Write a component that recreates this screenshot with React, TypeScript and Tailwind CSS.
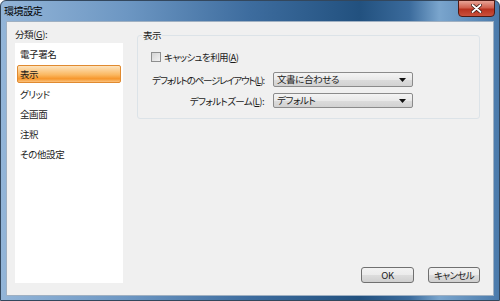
import React from "react";

const categories = ["電子署名", "表示", "グリッド", "全画面", "注釈", "その他設定"];

const Arrow = () => (
  <svg width="7" height="4" viewBox="0 0 7 4" className="shrink-0">
    <path d="M0 0h7L3.5 4z" fill="#111" />
  </svg>
);

const Select = ({ value }: { value: string }) => (
  <div className="h-[15px] flex items-center justify-between pl-[3px] pr-[6px] border border-[#8b8b8b] rounded-[2px] bg-[linear-gradient(#f4f4f4,#e9e9e9_50%,#dcdcdc_51%,#d2d2d2)]">
    <span className="leading-[13px]">{value}</span>
    <Arrow />
  </div>
);

export default function App() {
  return (
    <div className="w-[500px] h-[301px] flex flex-col rounded-t-[6px] border border-[#33475d] bg-[linear-gradient(90deg,#93b5d8_0%,#6d97c3_25%,#3d6c9e_50%,#22517f_72%,#3b6b9c_82%,#7aa5cd_88%,#4a7aab_100%)] font-['Noto_Sans_CJK_JP',sans-serif] text-[9.5px] tracking-[-0.4px] text-[#1b1b1b] [font-feature-settings:'palt']">
      {/* title bar */}
      <div className="relative h-[20px] flex items-center pl-[3px]">
        <span className="text-[10px] text-black leading-[14px]">環境設定</span>
        <div className="absolute right-[4px] top-[-1px] w-[37px] h-[17px] flex items-center justify-center rounded-b-[4px] border border-[#4f1a14] bg-[linear-gradient(#e8a497,#d0604e_45%,#b8321f_55%,#c9503c)]">
          <svg width="11" height="9" viewBox="0 0 11 9">
            <path d="M1.5 1l8 7M9.5 1l-8 7" stroke="#3a1712" strokeWidth="3.4" strokeLinecap="round" />
            <path d="M1.5 1l8 7M9.5 1l-8 7" stroke="#fff" strokeWidth="1.8" strokeLinecap="round" />
          </svg>
        </div>
      </div>

      {/* client area */}
      <div className="flex-1 mx-[5px] mb-[4px] border border-[#9fb0c2] bg-[#f0f0f0] flex">
        {/* categories */}
        <div className="ml-[8px] w-[108px] flex flex-col">
          <div className="h-[21px] pt-[5px] leading-[14px]">
            分類(<span className="underline">G</span>):
          </div>
          <div className="h-[240px] bg-white pt-[1px]">
            {categories.map((c) => (
              <div key={c} className="h-[20px] px-[2px] py-[1px]">
                <div
                  className={`h-[18px] flex items-center rounded-[2px] leading-[14px] ${
                    c === "表示"
                      ? "border border-[#e08a30] bg-[linear-gradient(#fde3bd,#fbb861_55%,#f6962c_80%,#fbc27e)] pl-[2px]"
                      : "pl-[3px]"
                  }`}
                >
                  {c}
                </div>
              </div>
            ))}
          </div>
        </div>

        {/* settings */}
        <div className="ml-[14px] pr-[13px] flex-1 flex flex-col">
          <div className="relative mt-[13px] h-[84px] border border-[#dce3e8] rounded-[3px]">
            <span className="absolute left-[4px] top-[-8px] px-[1px] bg-[#f0f0f0] leading-[14px]">表示</span>
            <div className="mt-[15px] ml-[13px] flex items-center gap-[3px]">
              <div className="w-[10px] h-[10px] border border-[#8e8f8f] bg-[linear-gradient(135deg,#d4d4d4,#f2f2f2)]" />
              <span className="leading-[12px] tracking-[-0.6px]">
                キャッシュを利用(<span className="underline">A</span>)
              </span>
            </div>
            <div className="mt-[9px] pl-[14px] grid grid-cols-[112px_140px] gap-x-[9px] gap-y-[6px] items-center">
              <span className="justify-self-end whitespace-nowrap leading-[14px] tracking-[-1.2px]">
                デフォルトのページレイアウト(<span className="underline">L</span>):
              </span>
              <Select value="文書に合わせる" />
              <span className="justify-self-end whitespace-nowrap leading-[14px] tracking-[-0.6px]">
                デフォルトズーム(<span className="underline">L</span>):
              </span>
              <Select value="デフォルト" />
            </div>
          </div>

          <div className="mt-auto mb-[12px] flex justify-end gap-[14px]">
            <button className="w-[53px] h-[16px] border border-[#707070] rounded-[3px] bg-[linear-gradient(#f2f2f2,#ebebeb_50%,#dddddd_51%,#cfcfcf)] leading-[12px]">
              OK
            </button>
            <button className="w-[52px] h-[16px] border border-[#707070] rounded-[3px] bg-[linear-gradient(#f2f2f2,#ebebeb_50%,#dddddd_51%,#cfcfcf)] leading-[12px] tracking-[-0.6px]">
              キャンセル
            </button>
          </div>
        </div>
      </div>
    </div>
  );
}
